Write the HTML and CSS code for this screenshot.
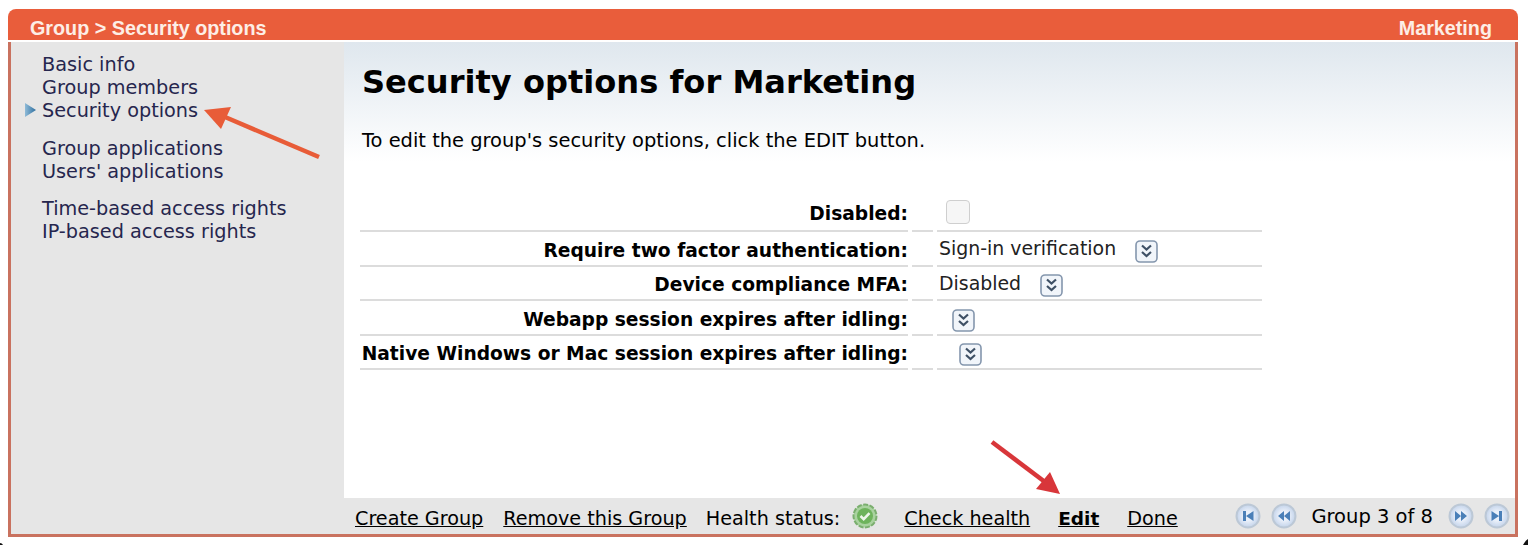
FILE: index.html
```html
<!DOCTYPE html>
<html lang="en">
<head>
  <meta charset="UTF-8">
  <meta name="viewport" content="width=device-width, initial-scale=1.0">
  <title>Security options</title>
  <link rel="stylesheet" href="styles.css">
</head>
<body>
  <svg class="defs" width="0" height="0">
    <defs>
      <radialGradient id="pageFill">
        <stop offset="0.4" stop-color="#eaf0fa"/>
        <stop offset="1" stop-color="#c3d3ea"/>
      </radialGradient>
    </defs>
    <symbol id="dropIcon" viewBox="0 0 23 23">
      <rect x="1" y="1" width="21" height="21" rx="4" fill="#f1f5fa" stroke="#8496ad" stroke-width="1.6"/>
      <path d="M7 5.500l4.500 4 4.500-4M7 12l4.500 4 4.500-4" fill="none" stroke="#3e5065" stroke-width="2.200"/>
    </symbol>
    <symbol id="pageRing" viewBox="0 0 26 26">
      <circle cx="13" cy="13" r="11.500" fill="url(#pageFill)" stroke="#bcc8d6" stroke-width="2"/>
    </symbol>
  </svg>

  <div class="frame">
    <div class="titleBar">
      <span>Group &gt; Security options</span>
      <span>Marketing</span>
    </div>
    <div class="panel">
      <div class="sidebar">
        <ul class="navGroup">
          <li>Basic info</li>
          <li>Group members</li>
          <li class="current">Security options</li>
        </ul>
        <ul class="navGroup">
          <li>Group applications</li>
          <li>Users' applications</li>
        </ul>
        <ul class="navGroup">
          <li>Time-based access rights</li>
          <li>IP-based access rights</li>
        </ul>
      </div>
      <div class="main">
        <div class="content">
          <h1>Security options for Marketing</h1>
          <p class="intro">To edit the group's security options, click the EDIT button.</p>
          <div class="form">
            <div class="label rowOne">Disabled:</div><div class="gap rowOne"></div>
            <div class="value rowOne"><span class="check"></span></div>

            <div class="label">Require two factor authentication:</div><div class="gap"></div>
            <div class="value"><span class="valueText">Sign-in verification</span><svg class="drop"><use href="#dropIcon"/></svg></div>

            <div class="label">Device compliance MFA:</div><div class="gap"></div>
            <div class="value"><span class="valueText">Disabled</span><svg class="drop"><use href="#dropIcon"/></svg></div>

            <div class="label">Webapp session expires after idling:</div><div class="gap"></div>
            <div class="value indentA"><svg class="drop"><use href="#dropIcon"/></svg></div>

            <div class="label">Native Windows or Mac session expires after idling:</div><div class="gap"></div>
            <div class="value indentB"><svg class="drop"><use href="#dropIcon"/></svg></div>
          </div>
        </div>
        <div class="footer">
          <a href="#">Create Group</a>
          <a href="#">Remove this Group</a>
          <span class="health">Health status:
            <svg class="healthIcon" viewBox="0 0 26 26">
              <circle cx="13" cy="13" r="11.500" fill="#a9d29f"/>
              <circle cx="13" cy="13" r="11.500" fill="none" stroke="#7aae6e" stroke-width="2" stroke-dasharray="5 1.500"/>
              <circle cx="13" cy="13" r="8" fill="#6eb35c"/>
              <path d="M8.500 13l3.200 3.200 5.800-6" fill="none" stroke="#eef6ea" stroke-width="2.600"/>
            </svg>
          </span>
          <a href="#">Check health</a>
          <a href="#" class="strong">Edit</a>
          <a href="#">Done</a>
          <div class="pager">
            <svg class="pageBtn" viewBox="0 0 26 26"><use href="#pageRing"/><path d="M8 8h3v10H8zM18.500 8v10L11 13z" fill="#4a7fb8"/></svg>
            <svg class="pageBtn" viewBox="0 0 26 26"><use href="#pageRing"/><path d="M13 8v10l-6-5zM19 8v10l-6-5z" fill="#4a7fb8"/></svg>
            <span class="pageText">Group 3 of 8</span>
            <svg class="pageBtn" viewBox="0 0 26 26"><use href="#pageRing"/><path d="M7 8v10l6-5zM13 8v10l6-5z" fill="#4a7fb8"/></svg>
            <svg class="pageBtn" viewBox="0 0 26 26"><use href="#pageRing"/><path d="M7.500 8v10l7.500-5zM15 8h3v10h-3z" fill="#4a7fb8"/></svg>
          </div>
        </div>
      </div>
    </div>
  </div>

  <!-- arrows and the window corners showing through, drawn on top of the screenshot -->
  <svg class="arrows" width="1528" height="545" viewBox="0 0 1528 545">
    <path d="M319 157L225 117" stroke="#e85c38" stroke-width="4.500" fill="none"/>
    <path d="M204 110L231 107L221 129Z" fill="#e85c38"/>
    <path d="M992 442L1045 482" stroke="#d8363a" stroke-width="4.500" fill="none"/>
    <path d="M1060 494L1036 489L1050 472Z" fill="#d8363a"/>
    <path d="M1528 539Q1525 541 1523 545H1528Z" fill="#111"/>
    <path d="M0 543Q2 543 3 545H0Z" fill="#111"/>
  </svg>
</body>
</html>
```

FILE: styles.css
```css
* {
  box-sizing: border-box;
}

html, body {
  margin: 0;
  height: 545px;
  background-color: #fff;
  overflow: hidden;
}

body {
  position: relative;
  padding: 9px 10px 8px 8px;
  font-family: "DejaVu Sans", Verdana, sans-serif;
  font-size: 19px;
  color: #000;
}

.defs {
  position: absolute;
}

.frame {
  height: 528px;
  display: flex;
  flex-direction: column;
}

.titleBar {
  height: 31px;
  padding: 7px 26px 0 22px;
  display: flex;
  justify-content: space-between;
  background-color: #e95d3b;
  border-radius: 8px 8px 0 0;
  color: #fdeee6;
  font-family: "Liberation Sans", Arial, sans-serif;
  font-size: 19.750px;
  font-weight: bold;
  line-height: 24px;
}

.panel {
  flex: 1;
  margin-top: 2px;
  display: flex;
  border: 3px solid #c9725f;
  border-top: none;
  background-color: #e6e6e6;
}

.sidebar {
  width: 333px;
  padding-top: 11px;
  padding-left: 31px;
  color: #26264e;
  font-size: 19.250px;
}

.navGroup {
  list-style: none;
  margin: 0 0 14.500px;
  padding: 0;
}

.navGroup li {
  height: 23px;
  line-height: 23px;
  position: relative;
}

.current::before {
  content: "";
  position: absolute;
  left: -17px;
  top: 4px;
  width: 11px;
  height: 14px;
  background: linear-gradient(90deg, #8fbbd8, #2f6f9f);
  clip-path: polygon(0 0, 100% 50%, 0 100%);
}

.main {
  flex: 1;
  display: flex;
  flex-direction: column;
}

.content {
  flex: 1;
  padding: 20px 0 0 16px;
  background: linear-gradient(#dfe7ee, #fff 120px);
}

h1 {
  margin: 0;
  padding-left: 2px;
  font-size: 32.100px;
  line-height: 40px;
  font-weight: bold;
}

.intro {
  margin: 27px 0 0 2px;
  line-height: 24px;
  font-size: 19.450px;
}

.form {
  margin-top: 44.500px;
  width: 902px;
  display: grid;
  grid-template-columns: 548px 21px 325px;
  column-gap: 4px;
  grid-auto-rows: 34.500px;
}

.form > div {
  border-bottom: 2px solid #dcdcdc;
  display: flex;
  align-items: center;
}

.form > .rowOne {
  padding-bottom: 4px;
}

.label {
  justify-content: flex-end;
  font-weight: bold;
  font-size: 18.650px;
  white-space: nowrap;
  padding-top: 4px;
}

.value {
  padding-left: 2px;
  font-size: 18.900px;
  color: #222;
}

.valueText {
  margin-right: 19px;
}

.indentA {
  padding-left: 15px;
}

.indentB {
  padding-left: 22px;
}

.check {
  width: 24px;
  height: 24px;
  margin-left: 7px;
  background-color: #f6f6f6;
  border: 1px solid #cfcfcf;
  border-radius: 4px;
}

.drop {
  width: 23px;
  height: 23px;
  margin-top: 6px;
}

.footer {
  height: 36px;
  display: flex;
  align-items: center;
  padding: 4px 0 0 11px;
  background-color: #e6e6e6;
  white-space: nowrap;
  font-size: 19.200px;
}

.footer a {
  color: #000;
  margin-right: 20px;
}

.footer .strong {
  font-weight: bold;
  margin-left: 8px;
  margin-right: 28px;
  font-size: 18.500px;
}

.health {
  display: flex;
  align-items: center;
  gap: 12px;
  margin-right: 26px;
  margin-left: -1px;
}

.healthIcon {
  width: 26px;
  height: 26px;
  margin-top: -5px;
}

.pager {
  margin-left: auto;
  margin-right: 5px;
  display: flex;
  align-items: center;
  gap: 10px;
}

.pageBtn {
  width: 26px;
  height: 26px;
  margin-top: -4px;
}

.pageText {
  margin: -4px 5px 0 4px;
  font-size: 19.500px;
}

.arrows {
  position: absolute;
  left: 0;
  top: 0;
  pointer-events: none;
}
```
